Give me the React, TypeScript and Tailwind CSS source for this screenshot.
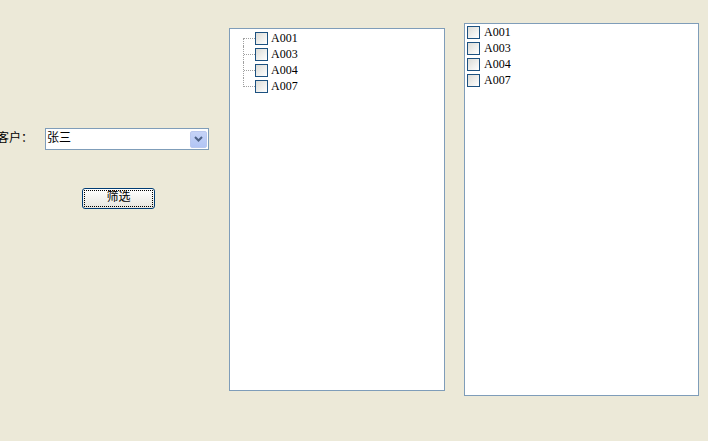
import React from 'react';

const items = ['A001', 'A003', 'A004', 'A007'];

function CheckBox() {
  return (
    <span className="block w-[13px] h-[13px] border border-[#1C5180] bg-gradient-to-br from-[#DCDCD7] to-white shrink-0" />
  );
}

export default function App() {
  const font = { fontFamily: '"Liberation Serif", "Noto Sans CJK SC", serif' };
  return (
    <div
      className="w-[708px] h-[441px] bg-[#ECE9D8] flex items-start text-[12px] text-black overflow-hidden"
      style={{ fontFamily: '"Noto Sans CJK SC", sans-serif' }}
    >
      {/* 左侧：客户筛选 */}
      <div className="w-[229px] shrink-0 pt-[128px]">
        <div className="flex items-center">
          <span className="ml-[-3px] w-[48px] leading-[22px] relative -top-[2px]">客户：</span>
          <div className="w-[164px] h-[22px] border border-[#7F9DB9] bg-white flex items-center">
            <span className="pl-[1px] flex-1 leading-[20px] relative -top-[2px]">张三</span>
            <span className="w-[17px] h-[17px] mr-[1px] rounded-[2px] bg-gradient-to-b from-[#C6D3F7] to-[#B2C5F5] border border-[#BAC8EF] flex items-center justify-center">
              <svg width="9" height="6" viewBox="0 0 9 6">
                <path d="M1 1 L4.5 4.5 L8 1" stroke="#4D6185" strokeWidth="2" fill="none" />
              </svg>
            </span>
          </div>
        </div>
        <button className="mt-[38px] ml-[82px] w-[73px] h-[21px] rounded-[3px] border border-[#003C74] bg-gradient-to-b from-white to-[#E6E5DE] p-[1px]">
          <span className="block w-full h-full border border-dotted border-black text-center">
            <span className="block relative -top-[4px] leading-[17px]">筛选</span>
          </span>
        </button>
      </div>

      {/* 树形列表 */}
      <div className="mt-[28px] w-[216px] h-[363px] border border-[#7F9DB9] bg-white shrink-0 pt-[1px]" style={font}>
        {items.map((it, i) => (
          <div key={it} className="flex items-center h-[16px]">
            <span className="relative w-[25px] h-[16px] shrink-0">
              <span
                className={`absolute left-[13px] border-l border-dotted border-[#A0A0A0] ${
                  i === 0 ? 'top-[8px] h-[8px]' : i === items.length - 1 ? 'top-0 h-[9px]' : 'top-0 h-[16px]'
                }`}
              />
              <span className="absolute left-[14px] top-[8px] w-[11px] border-t border-dotted border-[#A0A0A0]" />
            </span>
            <CheckBox />
            <span className="ml-[3px] leading-[16px]">{it}</span>
          </div>
        ))}
      </div>

      {/* 平铺列表 */}
      <div className="mt-[23px] ml-[19px] w-[235px] h-[373px] border border-[#7F9DB9] bg-white shrink-0 pt-0 pl-[2px]" style={font}>
        {items.map((it) => (
          <div key={it} className="flex items-center h-[16px]">
            <CheckBox />
            <span className="ml-[4px] leading-[16px]">{it}</span>
          </div>
        ))}
      </div>
    </div>
  );
}
